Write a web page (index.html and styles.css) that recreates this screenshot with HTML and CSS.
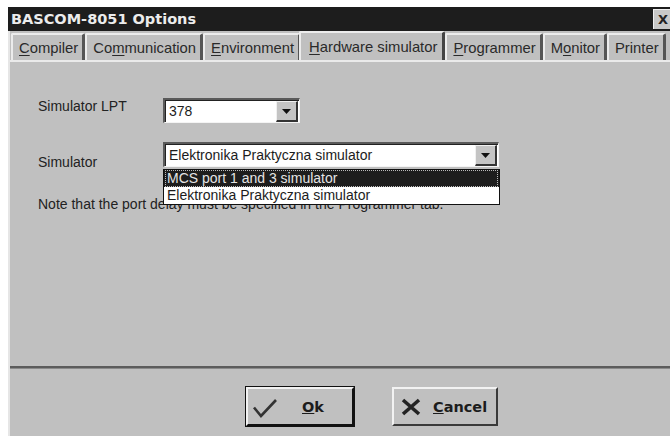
FILE: index.html
```html
<!DOCTYPE html>
<html>
<head>
<meta charset="utf-8">
<title>BASCOM-8051 Options</title>
<link rel="stylesheet" href="styles.css">
</head>
<body>
<div class="dialog">
  <div class="titlebar">
    <span class="title">BASCOM-8051 Options</span>
    <span class="close">X</span>
  </div>

  <div class="tabs">
    <div class="tab"><u>C</u>ompiler</div>
    <div class="tab">Co<u>m</u>munication</div>
    <div class="tab"><u>E</u>nvironment</div>
    <div class="tab active"><u>H</u>ardware simulator</div>
    <div class="tab"><u>P</u>rogrammer</div>
    <div class="tab">M<u>o</u>nitor</div>
    <div class="tab">Printer</div>
  </div>

  <div class="panel">
    <div class="row row-lpt">
      <span class="label">Simulator LPT</span>
      <div class="combo combo-short">
        <span class="value">378</span>
        <span class="drop"><svg width="9" height="5" viewBox="0 0 9 5"><path d="M0 0h9L4.5 5z" fill="#111"/></svg></span>
      </div>
    </div>

    <div class="row row-sim">
      <span class="label">Simulator</span>
      <div class="combo combo-long">
        <span class="value">Elektronika Praktyczna simulator</span>
        <span class="drop"><svg width="9" height="5" viewBox="0 0 9 5"><path d="M0 0h9L4.5 5z" fill="#111"/></svg></span>
        <ul class="droplist">
          <li class="selected"><span>MCS port 1 and 3 simulator</span></li>
          <li><span>Elektronika Praktyczna simulator</span></li>
        </ul>
      </div>
    </div>

    <p class="note">Note that the port delay must be specified in the Programmer tab.</p>
  </div>

  <div class="footer">
    <button class="btn btn-default">
      <svg class="ico" width="26" height="22" viewBox="0 0 26 22"><path d="M2 11.5l7 8.5L24 4" fill="none" stroke="#333" stroke-width="2.6"/></svg>
      <span class="btn-text btn-text-ok"><u>O</u>k</span>
    </button>
    <button class="btn">
      <svg class="ico" width="20" height="18" viewBox="0 0 20 18"><path d="M2 2l16 14M18 2L2 16" fill="none" stroke="#222" stroke-width="3.6"/></svg>
      <span class="btn-text"><u>C</u>ancel</span>
    </button>
  </div>
</div>
</body>
</html>
```

FILE: styles.css
```css
html, body {
  margin: 0;
  padding: 0;
  background: #fff;
  overflow: hidden;
}

body {
  font-family: "Liberation Sans", Arial, sans-serif;
  color: #1c1c1c;
}

.dialog {
  margin: 7px 0 0 8px;
  width: 662px;
  height: 429px;
  background: #c0c0c0;
  border-left: 2px solid #e6e6e6;
  box-sizing: border-box;
  display: flex;
  flex-direction: column;
}

/* caption bar */
.titlebar {
  height: 24px;
  background: #1d1d1d;
  display: flex;
  align-items: center;
  justify-content: space-between;
  flex: none;
  margin-left: -2px;
}

.title {
  font-family: "DejaVu Sans", sans-serif;
  font-weight: bold;
  font-size: 14.5px;
  color: #ececec;
  padding-left: 3px;
}

.close {
  width: 17px;
  height: 20px;
  background: #c8c8c8;
  border-top: 1px solid #f0f0f0;
  border-left: 1px solid #f0f0f0;
  box-sizing: border-box;
  font-family: "DejaVu Sans", sans-serif;
  font-weight: bold;
  font-size: 13px;
  color: #222;
  line-height: 19px;
  padding-left: 4px;
}

/* tab strip */
.tabs {
  height: 29px;
  display: flex;
  align-items: flex-end;
  padding-left: 1px;
  flex: none;
  position: relative;
  z-index: 1;
  overflow: hidden;
}

.tab {
  height: 27px;
  box-sizing: border-box;
  padding: 4px 4px 0 6px;
  font-size: 14.8px;
  line-height: 18px;
  color: #2a2a2a;
  border-top: 2px solid #ececec;
  border-left: 2px solid #ececec;
  border-right: 3px solid #555;
  border-radius: 2px 2px 0 0;
  white-space: nowrap;
  flex: none;
}

.tab u {
  text-decoration-thickness: 1px;
  text-underline-offset: 2px;
}

.tab.active {
  height: 31px;
  margin: 0 0 -2px -2px;
  padding: 5px 5px 0 8px;
  background: #c0c0c0;
  border-right-color: #444;
}

/* page body */
.panel {
  height: 306px;
  border-top: 2px solid #eaeaea;
  box-sizing: border-box;
  padding-left: 28px;
  position: relative;
  flex: none;
}

.row {
  display: grid;
  grid-template-columns: 125px auto;
  align-items: start;
}

.row-lpt {
  padding-top: 36px;
}

.row-sim {
  padding-top: 19px;
}

.row-sim .label {
  padding-top: 12px;
}

.label {
  font-size: 14px;
  line-height: 16px;
  color: #222;
}

.combo {
  height: 25px;
  box-sizing: border-box;
  background: #fff;
  border-top: 2px solid #5a5a5a;
  border-left: 2px solid #5a5a5a;
  border-right: 1px solid #f4f4f4;
  border-bottom: 1px solid #f4f4f4;
  box-shadow: inset 1px 1px 0 #222;
  display: flex;
  justify-content: space-between;
  align-items: stretch;
  position: relative;
}

.combo-short {
  width: 137px;
}

.combo-long {
  width: 336px;
}

.value {
  font-size: 14px;
  line-height: 21px;
  padding: 1px 0 0 4px;
  color: #1c1c1c;
}

.drop {
  width: 22px;
  margin: 1px 1px 0 0;
  background: #c4c4c4;
  border-top: 1px solid #f0f0f0;
  border-left: 1px solid #f0f0f0;
  border-right: 2px solid #333;
  border-bottom: 2px solid #333;
  box-sizing: border-box;
  display: flex;
  align-items: center;
  justify-content: center;
}

/* open dropdown list */
.droplist {
  position: absolute;
  left: -2px;
  top: 25px;
  width: 337px;
  margin: 0;
  padding: 0;
  list-style: none;
  background: #fff;
  border: 1px solid #111;
  box-sizing: border-box;
  z-index: 2;
}

.droplist li {
  height: 17px;
  font-size: 14px;
  line-height: 17px;
  padding: 0 1px;
}

.droplist li span {
  display: block;
  padding-left: 2px;
  color: #1c1c1c;
}

.droplist li.selected {
  background: #1d1d1d;
}

.droplist li.selected span {
  color: #e4e4e4;
  outline: 1px dotted #bbb;
  outline-offset: -1px;
}

.note {
  margin: 26px 0 0;
  font-size: 14px;
  line-height: 16px;
  color: #222;
}

/* button strip */
.footer {
  flex: 1;
  border-top: 2px solid #5c5c5c;
  box-shadow: inset 0 1px 0 #8a8a8a;
  display: flex;
  align-items: flex-start;
  gap: 38px;
  padding: 19px 0 0 236px;
  box-sizing: border-box;
}

.btn {
  height: 39px;
  width: 106px;
  background: #c0c0c0;
  border-top: 2px solid #f2f2f2;
  border-left: 2px solid #f2f2f2;
  border-right: 2px solid #3a3a3a;
  border-bottom: 2px solid #3a3a3a;
  padding: 0 0 0 7px;
  display: flex;
  align-items: center;
  font-family: "DejaVu Sans", sans-serif;
  font-weight: bold;
  font-size: 14.5px;
  color: #1c1c1c;
}

.btn-default {
  width: 108px;
  outline: 1px solid #111;
  border-right-color: #111;
  border-bottom-color: #111;
  padding-left: 4px;
}

.ico {
  flex: none;
}

.btn-text {
  margin-left: 12px;
}

.btn-text-ok {
  margin-left: 24px;
}
```
